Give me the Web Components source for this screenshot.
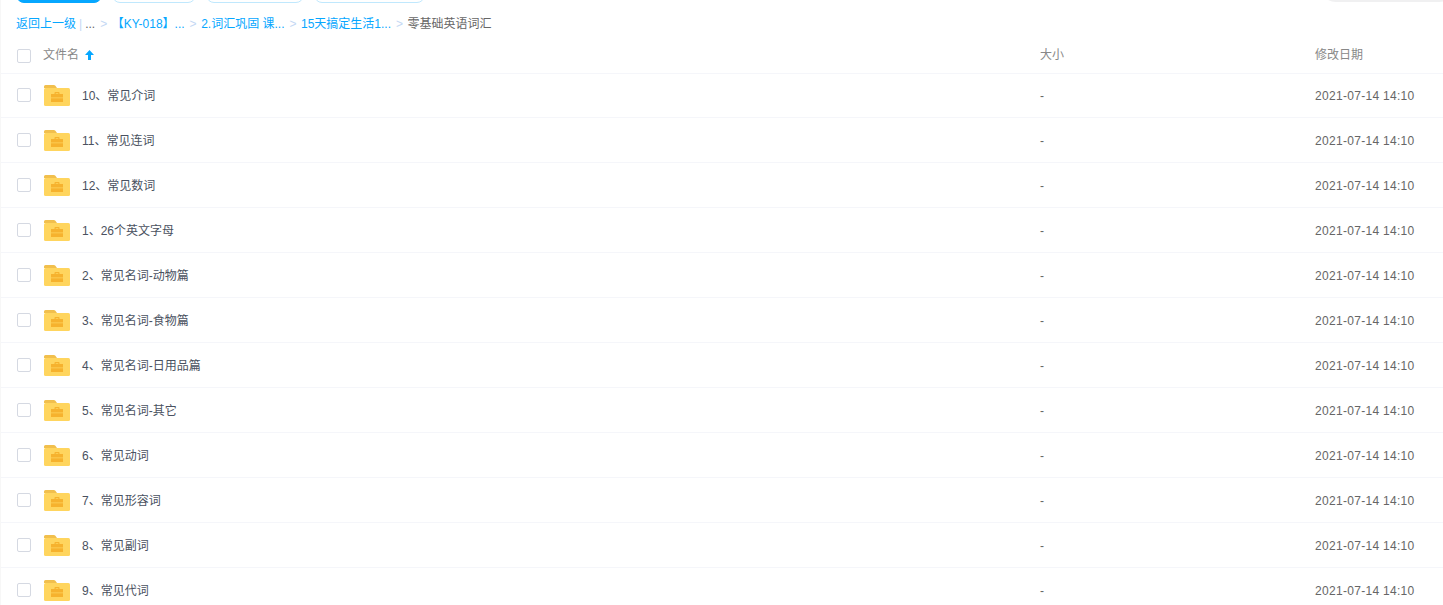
<!DOCTYPE html>
<html lang="zh">
<head>
<meta charset="utf-8">
<title>文件列表</title>
<style>
  html, body { margin: 0; height: 100%; overflow: hidden; background: #fff; }
  body { font: 12px "Liberation Sans", "Noto Sans CJK SC", sans-serif; color: #666; }
  file-row:first-of-type { height: 44px; padding-top: 0; }
</style>
</head>
<body>

<file-page>
  <tool-bar slot="bar">
    <tool-button primary style="--w:86px"></tool-button>
    <tool-button style="--w:84px"></tool-button>
    <tool-button style="--w:98px"></tool-button>
    <tool-button style="--w:111px"></tool-button>
  </tool-bar>
  <bread-crumbs slot="crumbs"></bread-crumbs>
  <file-header slot="head"></file-header>
  <file-row name="10、常见介词"></file-row>
  <file-row name="11、常见连词"></file-row>
  <file-row name="12、常见数词"></file-row>
  <file-row name="1、26个英文字母"></file-row>
  <file-row name="2、常见名词-动物篇"></file-row>
  <file-row name="3、常见名词-食物篇"></file-row>
  <file-row name="4、常见名词-日用品篇"></file-row>
  <file-row name="5、常见名词-其它"></file-row>
  <file-row name="6、常见动词"></file-row>
  <file-row name="7、常见形容词"></file-row>
  <file-row name="8、常见副词"></file-row>
  <file-row name="9、常见代词"></file-row>
</file-page>

<script>
// общие колонки таблицы: чекбокс, имя, размер, дата
const COLS = 'grid-template-columns: 42px 997px 275px 1fr;';

class FilePage extends HTMLElement {
  constructor() {
    super();
    this.attachShadow({ mode: 'open' });
    this.shadowRoot.innerHTML = `
      <style>
        :host { display: block; height: 605px; overflow: hidden; box-sizing: border-box; border-left: 1px solid #f7f7f7; }
      </style>
      <slot name="bar"></slot>
      <slot name="crumbs"></slot>
      <slot name="head"></slot>
      <slot></slot>
    `;
  }
}

class ToolBar extends HTMLElement {
  constructor() {
    super();
    this.attachShadow({ mode: 'open' });
    this.shadowRoot.innerHTML = `
      <style>
        :host { display: flex; height: 3px; align-items: flex-end; gap: 10px; padding-left: 15px; }
        .search { flex: none; width: 135px; height: 32px; margin: 0 -12px 1px auto; border-radius: 16px; background: #f0f0f1; }
      </style>
      <slot></slot>
      <div class="search"></div>
    `;
  }
}

class ToolButton extends HTMLElement {
  constructor() {
    super();
    this.attachShadow({ mode: 'open' });
    this.shadowRoot.innerHTML = `
      <style>
        :host { display: block; flex: none; box-sizing: border-box; width: var(--w); height: 32px; border: 1px solid #c0e8fd; border-radius: 8px; background: #fff; }
        :host([primary]) { border-color: #06a7ff; background: #06a7ff; }
      </style>
    `;
  }
}

class BreadCrumbs extends HTMLElement {
  constructor() {
    super();
    this.attachShadow({ mode: 'open' });
    this.shadowRoot.innerHTML = `
      <style>
        :host { display: block; box-sizing: border-box; height: 40px; padding: 2px 0 0 15px; line-height: 38px; white-space: nowrap; }
        a { color: #06a7ff; }
        .bar { color: #c4d8f4; margin: 0 3px; }
        .sep { color: #c4d8f4; margin: 0 4.5px 0 5px; }
      </style>
      <a>返回上一级</a><span class="bar">|</span><span>...</span><span class="sep">&gt;</span><a>【KY-018】...</a><span class="sep">&gt;</span><a>2.词汇巩固 课...</a><span class="sep">&gt;</span><a>15天搞定生活1...</a><span class="sep">&gt;</span><span>零基础英语词汇</span>
    `;
  }
}

class FileHeader extends HTMLElement {
  constructor() {
    super();
    this.attachShadow({ mode: 'open' });
    this.shadowRoot.innerHTML = `
      <style>
        :host { display: grid; ${COLS} height: 30px; box-sizing: border-box; padding-bottom: 5px; align-items: center; color: #888; line-height: 14px; }
        .box { box-sizing: border-box; width: 14px; height: 14px; margin-left: 16px; border: 1px solid #d5d9e2; border-radius: 2px; }
        .txt { margin-bottom: 2px; }
        .name { display: flex; align-items: center; gap: 6px; }
        svg { display: block; }
      </style>
      <div class="box"></div>
      <div class="name txt"><span>文件名</span>
        <svg width="9" height="10" viewBox="0 0 9 10"><path d="M4.5 0 9 5H6v5H3V5H0z" fill="#06a7ff"/></svg>
      </div>
      <div class="txt">大小</div>
      <div class="txt">修改日期</div>
    `;
  }
}

class FileRow extends HTMLElement {
  constructor() {
    super();
    this.attachShadow({ mode: 'open' });
    this.shadowRoot.innerHTML = `
      <style>
        :host { display: grid; ${COLS} height: 45px; box-sizing: border-box; border-top: 1px solid #f5f6fa; padding-top: 1px; align-items: center; color: #666; line-height: 14px; }
        .box { box-sizing: border-box; width: 14px; height: 14px; margin: 0 0 2px 16px; border: 1px solid #d5d9e2; border-radius: 2px; }
        .name { display: flex; align-items: center; gap: 11px; color: #4a5160; }
        .date { letter-spacing: .3px; }
        svg { display: block; margin-left: 1px; }
      </style>
      <div class="box"></div>
      <div class="name">
        <svg width="27" height="22" viewBox="0 0 27 22">
          <path d="M0 3V1.5A1.5 1.5 0 0 1 1.5 0h8.3a2 2 0 0 1 1.6.8L13 3z" fill="#f1bf4d"/>
          <rect y="3" width="26" height="18" rx="1.5" fill="#ffd55e"/>
          <path d="M10.5 9V7.8c0-.5.4-.8.8-.8h3.4c.4 0 .8.3.8.8V9H19v3.5H7V9zm1.2 0h2.6v-.8h-2.6zM7 13.3h12V17H7z" fill="#f6b22e"/>
        </svg>
        <span></span>
      </div>
      <div>-</div>
      <div class="date">2021-07-14 14:10</div>
    `;
    this.shadowRoot.querySelector('span').textContent = this.getAttribute('name');
  }
}

customElements.define('file-page', FilePage);
customElements.define('tool-bar', ToolBar);
customElements.define('tool-button', ToolButton);
customElements.define('bread-crumbs', BreadCrumbs);
customElements.define('file-header', FileHeader);
customElements.define('file-row', FileRow);
</script>
</body>
</html>
